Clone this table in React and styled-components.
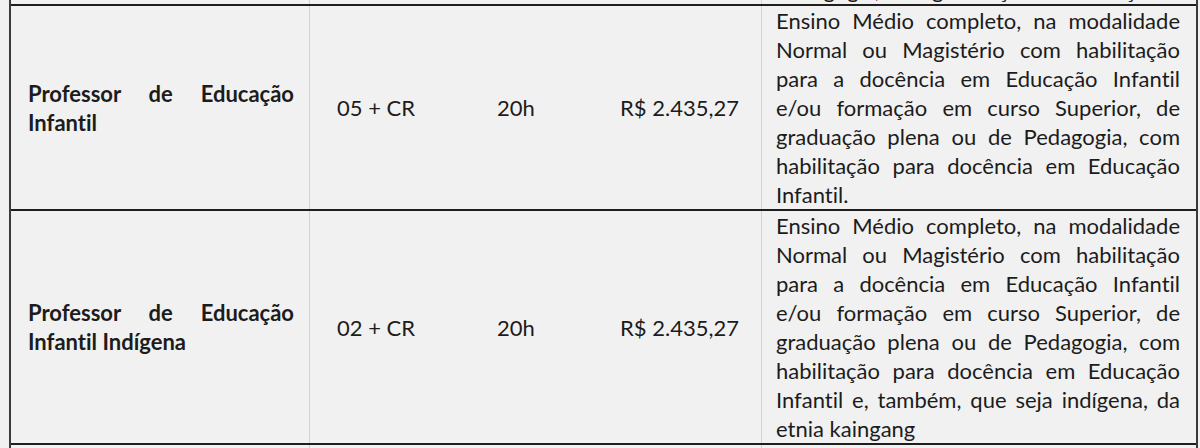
import styled, { createGlobalStyle } from "styled-components";

const GlobalStyle = createGlobalStyle`
  html, body {
    margin: 0;
    padding: 0;
    background: #f1f1f1;
  }
  body {
    font-family: Lato, "Open Sans", "Liberation Sans", sans-serif;
    font-variant-ligatures: none;
    color: #1c1c1c;
  }
`;

const Viewport = styled.div`
  width: 1200px;
  height: 448px;
  overflow: hidden;
`;

const Table = styled.div`
  width: 1185px;
  margin: -25px 0 0 9px;
  border-left: 2px solid #3a3a3a;
  border-right: 2px solid #3a3a3a;
  display: flex;
  flex-direction: column;
`;

const Row = styled.div`
  display: grid;
  grid-template-columns: 299px 160px 123px 169px 1fr;
  border-bottom: 2px solid #1e1e1e;
  min-height: ${(p) => p.$min || 0}px;
`;

const Cell = styled.div`
  display: flex;
  align-items: center;
  padding: 0 15px 0 ${(p) => p.$pad || 27}px;
  font-size: 22px;
  line-height: 29px;
  border-right: ${(p) => (p.$divider ? "1px solid #d2d2d2" : "none")};
`;

const NameCell = styled(Cell)`
  font-weight: 700;
`;

const Block = styled.div`
  width: 100%;
`;

const Line = styled.span`
  display: block;
  text-align: ${(p) => (p.$last ? "left" : "justify")};
  text-align-last: ${(p) => (p.$last ? "left" : "justify")};
`;

const DescCell = styled.div`
  padding: 0 16px 0 14px;
  font-size: 22px;
  line-height: 29px;
`;

const Justified = ({ lines }) => (
  <Block>
    {lines.map((l, i) => (
      <Line key={i} $last={i === lines.length - 1}>
        {l}
      </Line>
    ))}
  </Block>
);

const rows = [
  {
    name: ["Professor de Educação", "Infantil"],
    vagas: "05 + CR",
    carga: "20h",
    salario: "R$ 2.435,27",
    desc: [
      "Ensino Médio completo, na modalidade",
      "Normal ou Magistério com habilitação",
      "para a docência em Educação Infantil",
      "e/ou formação em curso Superior, de",
      "graduação plena ou de Pedagogia, com",
      "habilitação para docência em Educação",
      "Infantil.",
    ],
  },
  {
    name: ["Professor de Educação", "Infantil Indígena"],
    vagas: "02 + CR",
    carga: "20h",
    salario: "R$ 2.435,27",
    desc: [
      "Ensino Médio completo, na modalidade",
      "Normal ou Magistério com habilitação",
      "para a docência em Educação Infantil",
      "e/ou formação em curso Superior, de",
      "graduação plena ou de Pedagogia, com",
      "habilitação para docência em Educação",
      "Infantil e, também, que seja indígena, da",
      "etnia kaingang",
    ],
  },
];

export default function App() {
  return (
    <>
      <GlobalStyle />
      <Viewport>
        <Table>
          {/* previous row, cut off by the top of the screenshot */}
          <Row>
            <NameCell $pad={17} $divider />
            <Cell />
            <Cell />
            <Cell $divider />
            <DescCell>
              <Justified lines={["Pedagogia, com graduação e habilitação"]} />
            </DescCell>
          </Row>
          {rows.map((r, i) => (
            <Row key={i}>
              <NameCell $pad={17} $divider>
                <Justified lines={r.name} />
              </NameCell>
              <Cell>{r.vagas}</Cell>
              <Cell>{r.carga}</Cell>
              <Cell $divider>{r.salario}</Cell>
              <DescCell>
                <Justified lines={r.desc} />
              </DescCell>
            </Row>
          ))}
          <Row $min={40}>
            <NameCell $pad={17} $divider />
            <Cell />
            <Cell />
            <Cell $divider />
            <DescCell />
          </Row>
        </Table>
      </Viewport>
    </>
  );
}
